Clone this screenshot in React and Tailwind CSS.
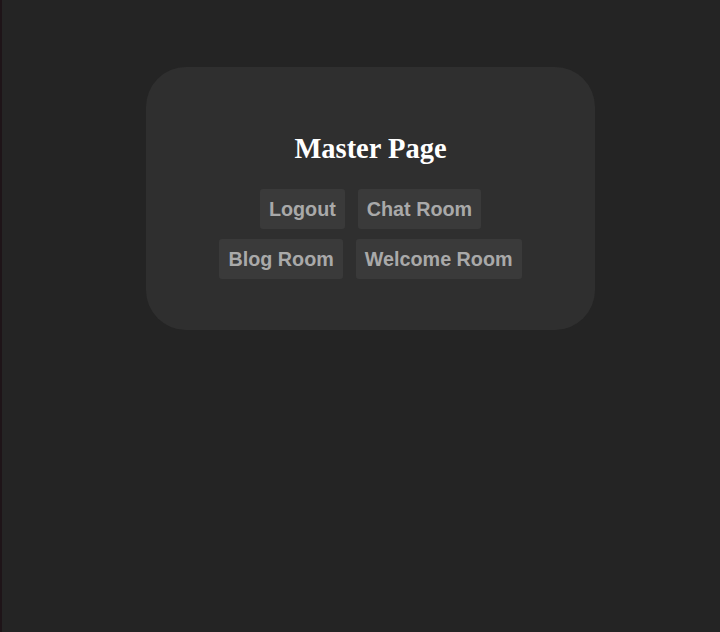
export default function App() {
  const rows = [
    ['Logout', 'Chat Room'],
    ['Blog Room', 'Welcome Room'],
  ]

  return (
    <div className="flex min-h-[632px] bg-[#242424]">
      <div className="w-[2px] shrink-0 bg-[#1e1418]" />
      <div className="pl-[144px] pt-[67px]">
        <div className="flex h-[263px] w-[449px] flex-col items-center rounded-[40px] bg-[#2f2f2f] pt-[64px]">
          <h1 className="font-['Liberation_Serif',serif] text-[28.5px] font-bold leading-[36px] text-white">
            Master Page
          </h1>
          <div className="mt-[22px] flex flex-col items-center gap-[10px]">
            {rows.map((row, i) => (
              <div key={i} className="flex gap-[13px]">
                {row.map((label) => (
                  <button
                    key={label}
                    className="h-10 rounded-[3px] bg-[#3a3a3a] px-[9px] pt-[2px] font-['Liberation_Sans',sans-serif] text-[19.75px] font-bold text-[#a9a9a9]"
                  >
                    {label}
                  </button>
                ))}
              </div>
            ))}
          </div>
        </div>
      </div>
    </div>
  )
}
